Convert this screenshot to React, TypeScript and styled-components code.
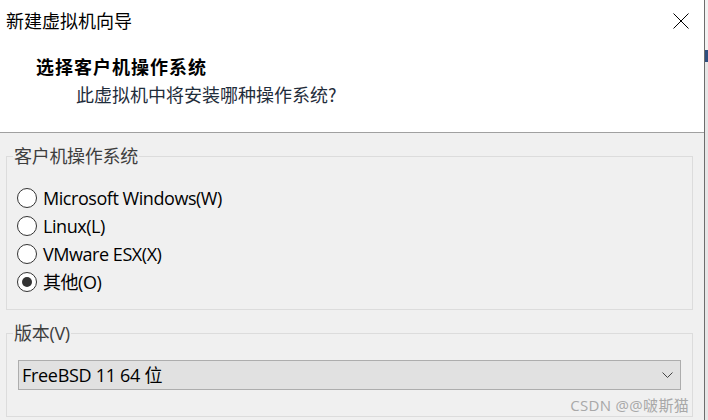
import React from "react";
import styled, { createGlobalStyle } from "styled-components";

const GlobalStyle = createGlobalStyle`
  html, body { margin: 0; padding: 0; background: #f0f0f0; overflow: hidden; }
  * { box-sizing: border-box; }
`;

const CJK = `"Noto Sans CJK SC", "Noto Sans", sans-serif`;
const UI = `"Open Sans", "Noto Sans CJK SC", sans-serif`;

const Page = styled.div`
  display: flex;
  width: 708px;
  height: 420px;
`;

const Window = styled.div`
  width: 705px;
  height: 420px;
  border-right: 1px solid #6d6d6d;
  display: flex;
  flex-direction: column;
  background: #f0f0f0;
`;

const Desktop = styled.div`
  flex: 1;
  background: linear-gradient(#f2f2f2 0 50px, #2f4f7f 50px 62px, #e6e6e6 62px);
`;

const Header = styled.div`
  height: 133px;
  background: #ffffff;
  border-bottom: 1px solid #a0a0a0;
  display: flex;
  flex-direction: column;
`;

const TitleBar = styled.div`
  display: flex;
  justify-content: space-between;
  align-items: flex-start;
  padding: 11px 15px 0 6px;
`;

const Title = styled.div`
  font-family: ${CJK};
  font-size: 18px;
  line-height: 18px;
  color: #000;
`;

const CloseIcon = styled.svg`
  margin-top: 2px;
  display: block;
`;

const Heading = styled.div`
  margin: 28px 0 0 36px;
  font-family: ${CJK};
  font-weight: 700;
  font-size: 18px;
  line-height: 18px;
  letter-spacing: 1px;
  color: #000;
`;

const Subtitle = styled.div`
  margin: 10px 0 0 76px;
  font-family: ${CJK};
  font-size: 18px;
  line-height: 18px;
  color: #1f2d3b;
`;

const Body = styled.div`
  position: relative;
  flex: 1;
  display: flex;
  flex-direction: column;
  gap: 14px;
  padding: 14px 11px 0 6px;
`;

const Group = styled.fieldset`
  margin: 0;
  padding: 0;
  min-width: 0;
  border: 1px solid #dcdcdc;
`;

const GroupLabel = styled.legend`
  margin-left: 6px;
  padding: 0 1px;
  font-family: ${UI};
  font-size: 18px;
  line-height: 18px;
  letter-spacing: -0.3px;
  color: #3e3e3e;
`;

const RadioList = styled.div`
  display: flex;
  flex-direction: column;
  padding: 19px 0 13px 10px;
`;

const RadioRow = styled.label`
  display: flex;
  align-items: center;
  gap: 6px;
  height: 28px;
  font-family: ${UI};
  font-size: 18px;
  line-height: 28px;
  letter-spacing: -0.45px;
  color: #000;
`;

const RadioCircle = styled.span<{ $checked: boolean }>`
  width: 20px;
  height: 20px;
  border-radius: 50%;
  border: 1px solid #333;
  background: #fff;
  display: flex;
  align-items: center;
  justify-content: center;
  &::after {
    content: "";
    width: 10px;
    height: 10px;
    border-radius: 50%;
    background: ${(p) => (p.$checked ? "#333" : "transparent")};
  }
`;

const SelectArea = styled.div`
  padding: 18px 11px 26px 11px;
`;

const SelectBox = styled.div`
  height: 30px;
  background: #e1e1e1;
  border: 1px solid #adadad;
  display: flex;
  align-items: center;
  justify-content: space-between;
  padding: 0 7px 0 3px;
  font-family: ${UI};
  font-size: 18px;
  line-height: 28px;
  letter-spacing: -0.3px;
  color: #000;
`;

const Watermark = styled.div`
  position: absolute;
  right: 15px;
  bottom: 7px;
  font-family: ${UI};
  font-size: 15px;
  line-height: 16px;
  color: #a8a8a8;
  letter-spacing: 0.3px;
`;

const options = [
  { label: "Microsoft Windows(W)", checked: false },
  { label: "Linux(L)", checked: false },
  { label: "VMware ESX(X)", checked: false },
  { label: "其他(O)", checked: true },
];

export default function App() {
  return (
    <>
      <GlobalStyle />
      <Page>
        <Window>
          <Header>
            <TitleBar>
              <Title>新建虚拟机向导</Title>
              <CloseIcon width="16" height="16" viewBox="0 0 16 16">
                <path d="M0.5 0.5 L15.5 15.5 M15.5 0.5 L0.5 15.5" stroke="#000" strokeWidth="1" fill="none" />
              </CloseIcon>
            </TitleBar>
            <Heading>选择客户机操作系统</Heading>
            <Subtitle>此虚拟机中将安装哪种操作系统?</Subtitle>
          </Header>
          <Body>
            <Group>
              <GroupLabel>客户机操作系统</GroupLabel>
              <RadioList>
                {options.map((o) => (
                  <RadioRow key={o.label}>
                    <RadioCircle $checked={o.checked} />
                    {o.label}
                  </RadioRow>
                ))}
              </RadioList>
            </Group>
            <Group>
              <GroupLabel>版本(V)</GroupLabel>
              <SelectArea>
                <SelectBox>
                  <span>FreeBSD 11 64 位</span>
                  <svg width="11" height="6" viewBox="0 0 11 6">
                    <path d="M0.5 0.5 L5.5 5.5 L10.5 0.5" stroke="#444" strokeWidth="1" fill="none" />
                  </svg>
                </SelectBox>
              </SelectArea>
            </Group>
            <Watermark>CSDN @@啵斯猫</Watermark>
          </Body>
        </Window>
        <Desktop />
      </Page>
    </>
  );
}
